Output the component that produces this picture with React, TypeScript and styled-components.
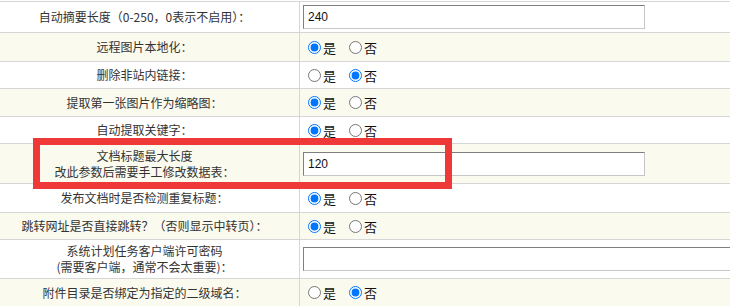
import React from 'react';
import styled, { createGlobalStyle } from 'styled-components';

const Global = createGlobalStyle`
  html, body { margin: 0; padding: 0; background: #fff; }
  body {
    font-family: "Noto Sans CJK SC", "Liberation Sans", sans-serif;
    font-size: 12px;
    color: #333;
  }
`;

const Page = styled.div`
  position: relative;
  width: 730px;
  height: 306px;
  overflow: hidden;
  padding-top: 1px;
  box-sizing: border-box;
`;

const Table = styled.div`
  width: 760px;
  border-top: 1px solid #d6d6d6;
`;

const Row = styled.div<{ $alt?: boolean; $h: number }>`
  display: grid;
  grid-template-columns: 300px 1fr;
  box-sizing: border-box;
  height: ${(p) => p.$h}px;
  background: ${(p) => (p.$alt ? '#fafaef' : '#ffffff')};
  border-bottom: 1px solid #d6d6d6;
`;

const Label = styled.div`
  box-sizing: border-box;
  border-right: 1px solid #d6d6d6;
  display: flex;
  align-items: center;
  justify-content: center;
  text-align: center;
  padding-right: 10px;
  line-height: 16px;
  white-space: nowrap;
`;

const Value = styled.div`
  display: flex;
  align-items: center;
  padding-left: 3px;
`;

const TextInput = styled.input<{ $w: number }>`
  box-sizing: border-box;
  width: ${(p) => p.$w}px;
  height: 24px;
  margin: 0;
  padding: 0 4px;
  border: 1px solid;
  border-color: #7f7f7f #c6c6c6 #c6c6c6 #7f7f7f;
  background: #fff;
  font-family: "Liberation Sans", Arial, sans-serif;
  font-size: 12px;
  color: #111;
  outline: none;
`;

const Option = styled.label`
  display: inline-flex;
  align-items: center;
  margin-right: 8px;
  color: #111;
  font-size: 13px;
`;

const Radio = styled.input`
  width: 13px;
  height: 13px;
  margin: 0 2px 0 5px;
`;

const Highlight = styled.div`
  position: absolute;
  left: 33px;
  top: 138px;
  width: 419px;
  height: 51px;
  box-sizing: border-box;
  border: 7px solid #ef3939;
  pointer-events: none;
`;

type Item =
  | { label: React.ReactNode; kind: 'input'; value: string; w: number; h: number }
  | { label: React.ReactNode; kind: 'radio'; yes: boolean; h: number };

const items: Item[] = [
  { label: '自动摘要长度（0-250，0表示不启用）：', kind: 'input', value: '240', w: 342, h: 31 },
  { label: '远程图片本地化：', kind: 'radio', yes: true, h: 29 },
  { label: '删除非站内链接：', kind: 'radio', yes: false, h: 27 },
  { label: '提取第一张图片作为缩略图：', kind: 'radio', yes: true, h: 28 },
  { label: '自动提取关键字：', kind: 'radio', yes: true, h: 27 },
  {
    label: (
      <>
        文档标题最大长度
        <br />
        改此参数后需要手工修改数据表：
      </>
    ),
    kind: 'input',
    value: '120',
    w: 342,
    h: 40,
  },
  { label: '发布文档时是否检测重复标题：', kind: 'radio', yes: true, h: 29 },
  { label: '跳转网址是否直接跳转？（否则显示中转页）：', kind: 'radio', yes: true, h: 27 },
  {
    label: (
      <>
        系统计划任务客户端许可密码
        <br />
        (需要客户端，通常不会太重要)：
      </>
    ),
    kind: 'input',
    value: '',
    w: 460,
    h: 39,
  },
  { label: '附件目录是否绑定为指定的二级域名：', kind: 'radio', yes: false, h: 28 },
];

export default function App() {
  return (
    <Page>
      <Global />
      <Table>
        {items.map((it, i) => (
          <Row key={i} $alt={i % 2 === 1} $h={it.h}>
            <Label>
              <span>{it.label}</span>
            </Label>
            <Value>
              {it.kind === 'input' ? (
                <TextInput $w={it.w} defaultValue={it.value} />
              ) : (
                <>
                  <Option>
                    <Radio type="radio" name={`r${i}`} defaultChecked={it.yes} />是
                  </Option>
                  <Option>
                    <Radio type="radio" name={`r${i}`} defaultChecked={!it.yes} />否
                  </Option>
                </>
              )}
            </Value>
          </Row>
        ))}
      </Table>
      <Highlight />
    </Page>
  );
}
